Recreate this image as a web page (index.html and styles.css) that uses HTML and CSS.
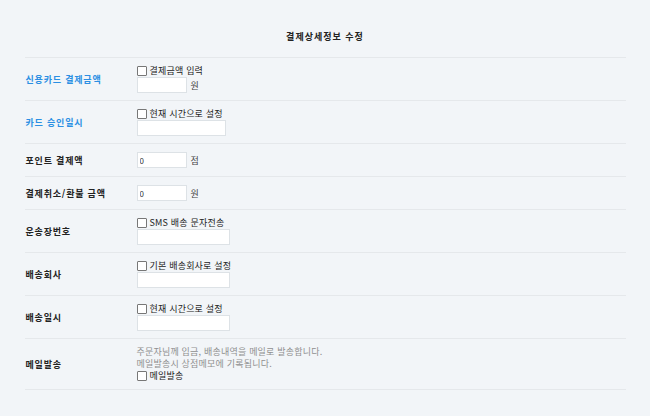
FILE: index.html
```html
<!DOCTYPE html>
<html lang="ko">
<head>
  <meta charset="UTF-8">
  <title>결제상세정보 수정</title>
  <link rel="stylesheet" href="styles.css">
</head>
<body>

  <div class="wrap">
    <h2 class="title">결제상세정보 수정</h2>

    <form id="payForm">
      <div class="row">
        <div class="label blue">신용카드 결제금액</div>
        <div class="field">
          <label class="check"><input type="checkbox"> 결제금액 입력</label>
          <div class="line"><input type="text" class="short"><span class="unit">원</span></div>
        </div>
      </div>

      <div class="row">
        <div class="label blue">카드 승인일시</div>
        <div class="field">
          <label class="check"><input type="checkbox"> 현재 시간으로 설정</label>
          <div class="line"><input type="text" class="long"></div>
        </div>
      </div>

      <div class="row single">
        <div class="label">포인트 결제액</div>
        <div class="field">
          <div class="line"><input type="text" class="short" value="0"><span class="unit">점</span></div>
        </div>
      </div>

      <div class="row single">
        <div class="label">결제취소/환불 금액</div>
        <div class="field">
          <div class="line"><input type="text" class="short" value="0"><span class="unit">원</span></div>
        </div>
      </div>

      <div class="row">
        <div class="label">운송장번호</div>
        <div class="field">
          <label class="check"><input type="checkbox"> SMS 배송 문자전송</label>
          <div class="line"><input type="text" class="mid"></div>
        </div>
      </div>

      <div class="row">
        <div class="label">배송회사</div>
        <div class="field">
          <label class="check"><input type="checkbox"> 기본 배송회사로 설정</label>
          <div class="line"><input type="text" class="mid"></div>
        </div>
      </div>

      <div class="row">
        <div class="label">배송일시</div>
        <div class="field">
          <label class="check"><input type="checkbox"> 현재 시간으로 설정</label>
          <div class="line"><input type="text" class="mid"></div>
        </div>
      </div>

      <div class="row">
        <div class="label">메일발송</div>
        <div class="field">
          <p class="note">주문자님께 입금, 배송내역을 메일로 발송합니다.<br>메일발송시 상점메모에 기록됩니다.</p>
          <label class="check"><input type="checkbox"> 메일발송</label>
        </div>
      </div>
    </form>
  </div>

</body>
</html>
```

FILE: styles.css
```css
body {
  margin: 0;
  background: #f2f5f8;
  font-family: "Noto Sans CJK KR", "Noto Sans", sans-serif;
  font-size: 9px;
  color: #222;
}

.wrap {
  width: 601px;
  margin: 0 auto;
}

.title {
  margin: 0;
  padding: 31px 0 14px;
  font-size: 9px;
  line-height: 12px;
  font-weight: bold;
  letter-spacing: 1px;
  text-align: center;
  border-bottom: 1px solid #e5e8eb;
}

.row {
  display: grid;
  grid-template-columns: 111px 1fr;
  align-items: center;
  padding: 7px 0;
  border-bottom: 1px solid #e5e8eb;
}

.row.single {
  padding: 8px 0;
}

.label {
  padding-left: 1px;
  font-weight: bold;
  color: #222;
  letter-spacing: 0.8px;
}

.label.blue {
  color: #2b8fe3;
}

.field {
  padding-left: 1px;
}

.check {
  display: flex;
  align-items: center;
  height: 12px;
  line-height: 12px;
  letter-spacing: 0.2px;
}

.check input {
  appearance: none;
  width: 10px;
  height: 10px;
  margin: 0 3px 0 0;
  border: 1px solid #777;
  border-radius: 1px;
  background: #fff;
}

.line {
  display: flex;
  align-items: center;
}

.line input {
  height: 16px;
  box-sizing: border-box;
  padding: 0 2px;
  border: 1px solid #dde2e6;
  background: #fff;
  font-family: inherit;
  font-size: 8px;
  color: #333;
  outline: none;
}

.short { width: 50px; }
.mid { width: 93px; }
.long { width: 89px; }

.unit {
  margin-left: 4px;
  color: #444;
}

.note {
  margin: 0;
  line-height: 12px;
  letter-spacing: 0.2px;
  color: #8f8f8f;
}
```
